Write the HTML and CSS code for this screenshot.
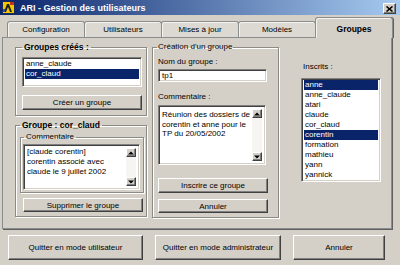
FILE: index.html
```html
<!DOCTYPE html>
<html lang="fr">
<head>
    <meta charset="UTF-8">
    <title>ARI - Gestion des utilisateurs</title>
    <link rel="stylesheet" href="styles.css">
</head>
<body>

<div class="window">
    <div class="titlebar">
        <svg class="app-icon" width="13" height="13" viewBox="0 0 13 13">
            <rect x="0" y="0" width="13" height="13" fill="#1a2a5a"/>
            <rect x="1" y="1" width="11" height="11" fill="#f2c800"/>
            <path d="M2 11 L5 3 L7 3 L10 11 L8 11 L6 6 L4 11 Z" fill="#202020"/>
            <rect x="8" y="1" width="4" height="3" fill="#c03020"/>
            <rect x="1" y="8" width="2" height="3" fill="#3050a0"/>
        </svg>
        <span class="title">ARI - Gestion des utilisateurs</span>
        <span class="close">
            <svg width="7" height="6" viewBox="0 0 7 6">
                <path d="M0.5 0.5 L6.5 5.5 M6.5 0.5 L0.5 5.5" stroke="#000" stroke-width="1.6"/>
            </svg>
        </span>
    </div>

    <div class="tabs">
        <div class="tab">Configuration</div>
        <div class="tab">Utilisateurs</div>
        <div class="tab">Mises à jour</div>
        <div class="tab">Modèles</div>
        <div class="tab active">Groupes</div>
    </div>

    <div class="panel">
        <div class="col-left">
            <fieldset class="group g-crees">
                <legend class="strong">Groupes créés :</legend>
                <ul class="listbox small">
                    <li>anne_claude</li>
                    <li class="sel">cor_claud</li>
                </ul>
                <button class="btn b-creer">Créer un groupe</button>
            </fieldset>

            <fieldset class="group g-groupe">
                <legend class="strong">Groupe : cor_claud</legend>
                <fieldset class="group sub">
                    <legend>Commentaire</legend>
                    <div class="memo m-left">
                        <div class="memo-text">[claude corentin]<br>corentin associé avec<br>claude le 9 juillet 2002</div>
                        <div class="scroll">
                            <span class="arrow"><svg width="6" height="4" viewBox="0 0 6 4"><path d="M0 3.5 L3 0.5 L6 3.5 Z" fill="#000"/></svg></span>
                            <span class="arrow"><svg width="6" height="4" viewBox="0 0 6 4"><path d="M0 0.5 L3 3.5 L6 0.5 Z" fill="#000"/></svg></span>
                        </div>
                    </div>
                </fieldset>
                <button class="btn b-suppr">Supprimer le groupe</button>
            </fieldset>
        </div>

        <fieldset class="group g-creation">
            <legend>Création d'un groupe</legend>
            <div class="label">Nom du groupe :</div>
            <div class="field">tp1</div>
            <div class="label l-comment">Commentaire :</div>
            <div class="memo m-mid">
                <div class="memo-text">Réunion des dossiers de<br>corentin et anne pour le<br>TP du 20/05/2002</div>
                <div class="scroll">
                    <span class="arrow"><svg width="6" height="4" viewBox="0 0 6 4"><path d="M0 3.5 L3 0.5 L6 3.5 Z" fill="#000"/></svg></span>
                    <span class="arrow"><svg width="6" height="4" viewBox="0 0 6 4"><path d="M0 0.5 L3 3.5 L6 0.5 Z" fill="#000"/></svg></span>
                </div>
            </div>
            <button class="btn b-inscrire">Inscrire ce groupe</button>
            <button class="btn b-annuler">Annuler</button>
        </fieldset>

        <div class="col-right">
            <div class="label l-inscrits">Inscrits :</div>
            <ul class="listbox inscrits">
                <li class="sel">anne</li>
                <li>anne_claude</li>
                <li>atari</li>
                <li>claude</li>
                <li>cor_claud</li>
                <li class="sel">corentin</li>
                <li>formation</li>
                <li>mathieu</li>
                <li>yann</li>
                <li>yannick</li>
            </ul>
        </div>
    </div>

    <div class="actions">
        <button class="btn big q-user">Quitter en mode utilisateur</button>
        <button class="btn big q-admin">Quitter en mode administrateur</button>
        <button class="btn big q-cancel">Annuler</button>
    </div>
</div>

</body>
</html>
```

FILE: styles.css
```css
* {
    box-sizing: border-box;
}

body {
    margin: 0;
    background-color: #d4d0c8;
    font-family: 'Liberation Sans', Arial, sans-serif;
    font-size: 8px;
    color: #000;
}

.window {
    width: 400px;
    height: 265px;
    overflow: hidden;
}

/* barre de titre */
.titlebar {
    height: 15px;
    display: flex;
    align-items: center;
    padding: 0 4px 0 2px;
    background: linear-gradient(to right, #0a246a, #a6caf0);
}

.app-icon {
    flex: none;
}

.title {
    margin-left: 5px;
    color: #fff;
    font-weight: bold;
    font-size: 9px;
    flex: 1;
}

.close {
    width: 13px;
    height: 11px;
    display: flex;
    align-items: center;
    justify-content: center;
    background: #d4d0c8;
    border: 1px solid;
    border-color: #fff #404040 #404040 #fff;
    box-shadow: inset -1px -1px 0 #808080;
    margin-top: 2px;
}

/* onglets */
.tabs {
    height: 22px;
    display: flex;
    align-items: flex-end;
    padding-left: 7px;
}

.tab {
    width: 78px;
    height: 16px;
    line-height: 15px;
    text-align: center;
    background: #dcd9d2;
    border: 1px solid #8a8d8e;
    border-bottom: none;
    border-radius: 3px 3px 0 0;
    box-shadow: inset 1px 1px 0 #f4f3ef;
}

.tab + .tab {
    margin-left: -1px;
}

.tab.active {
    height: 21px;
    line-height: 22px;
    margin-bottom: -1px;
    font-weight: bold;
    font-size: 8.5px;
    background: #d4d0c8;
    position: relative;
    z-index: 1;
    box-shadow: inset 1px 1px 0 #f4f3ef, 1px 0 0 #606060;
}

.panel {
    width: 390px;
    margin-left: 2px;
    display: flex;
    align-items: flex-start;
    padding: 4px 0 10px 12px;
    border: 1px solid #8a8d8e;
    box-shadow: 1px 1px 0 #606060;
}

/* cadres */
.group {
    margin: 0;
    min-width: 0;
    border: 1px solid #8c8a85;
    box-shadow: inset 1px 1px 0 #fff, 1px 1px 0 #fff;
}

.group legend {
    line-height: 10px;
    padding: 0 2px;
}

.strong {
    font-weight: bold;
    font-size: 8.5px;
}

.col-left {
    width: 132px;
    flex: none;
}

.g-crees {
    padding: 5px 4px 5px 6px;
}

.g-groupe {
    margin-top: 4px;
    padding: 2px 2px 4px 4px;
}

.sub {
    padding: 2px 3px 2px 2px;
}

.sub legend {
    margin-left: 1px;
}

.g-creation {
    width: 127px;
    flex: none;
    margin-left: 5px;
    padding: 5px 10px 4px 5px;
}

.g-creation legend {
    padding: 0 1px;
    margin-left: -1px;
}

.col-right {
    flex: 1;
    padding: 0 9px 0 22px;
}

.label {
    line-height: 10px;
}

.l-comment {
    margin-top: 10px;
}

.l-inscrits {
    margin-top: 20px;
    padding-left: 2px;
}

/* champs */
.listbox,
.field,
.memo {
    background: #fff;
    border: 1px solid;
    border-color: #808080 #fff #fff #808080;
    box-shadow: inset 1px 1px 0 #404040, inset -1px -1px 0 #d4d0c8;
}

.listbox {
    list-style: none;
    margin: 0;
    padding: 1px 2px;
}

.listbox li {
    line-height: 10px;
    padding-left: 1px;
    white-space: nowrap;
}

.listbox li.sel {
    background: #0a246a;
    color: #fff;
}

.listbox.small {
    height: 30px;
}

.inscrits {
    width: 80px;
    margin-top: 6px;
}

.field {
    margin-top: 2px;
    width: 109px;
    height: 13px;
    line-height: 11px;
    padding-left: 3px;
}

.memo {
    display: flex;
    padding: 2px;
}

.m-left {
    height: 46px;
}

.m-mid {
    width: 108px;
    height: 60px;
    margin-top: 3px;
}

.memo-text {
    flex: 1;
    line-height: 10px;
    padding-left: 1px;
    white-space: nowrap;
    overflow: hidden;
}

.m-mid .memo-text {
    line-height: 9.5px;
    padding: 2px 0 0 1px;
}

.scroll {
    width: 10px;
    flex: none;
    display: flex;
    flex-direction: column;
    justify-content: space-between;
    background: #f6f5f2;
    margin: 1px 1px 1px 0;
}

.arrow {
    height: 9px;
    display: flex;
    align-items: center;
    justify-content: center;
    background: #d4d0c8;
    border: 1px solid;
    border-color: #fff #404040 #404040 #fff;
    box-shadow: inset -1px -1px 0 #808080;
}

/* boutons */
.btn {
    display: block;
    width: 100%;
    height: 15px;
    padding: 0;
    font-family: 'Liberation Sans', Arial, sans-serif;
    font-size: 8px;
    color: #000;
    background: #d4d0c8;
    border: 1px solid;
    border-color: #fff #404040 #404040 #fff;
    box-shadow: inset -1px -1px 0 #808080;
}

.b-creer {
    margin-top: 8px;
}

.b-suppr {
    margin: 5px 1px 0 3px;
    width: calc(100% - 4px);
    height: 14px;
}

.b-inscrire {
    margin-top: 13px;
}

.b-annuler {
    margin-top: 6px;
    height: 14px;
}

.actions {
    display: flex;
    gap: 12px;
    margin-top: 6px;
    padding-left: 8px;
}

.btn.big {
    height: 25px;
}

.q-user {
    width: 135px;
}

.q-admin {
    width: 126px;
}

.q-cancel {
    width: 92px;
}
```
